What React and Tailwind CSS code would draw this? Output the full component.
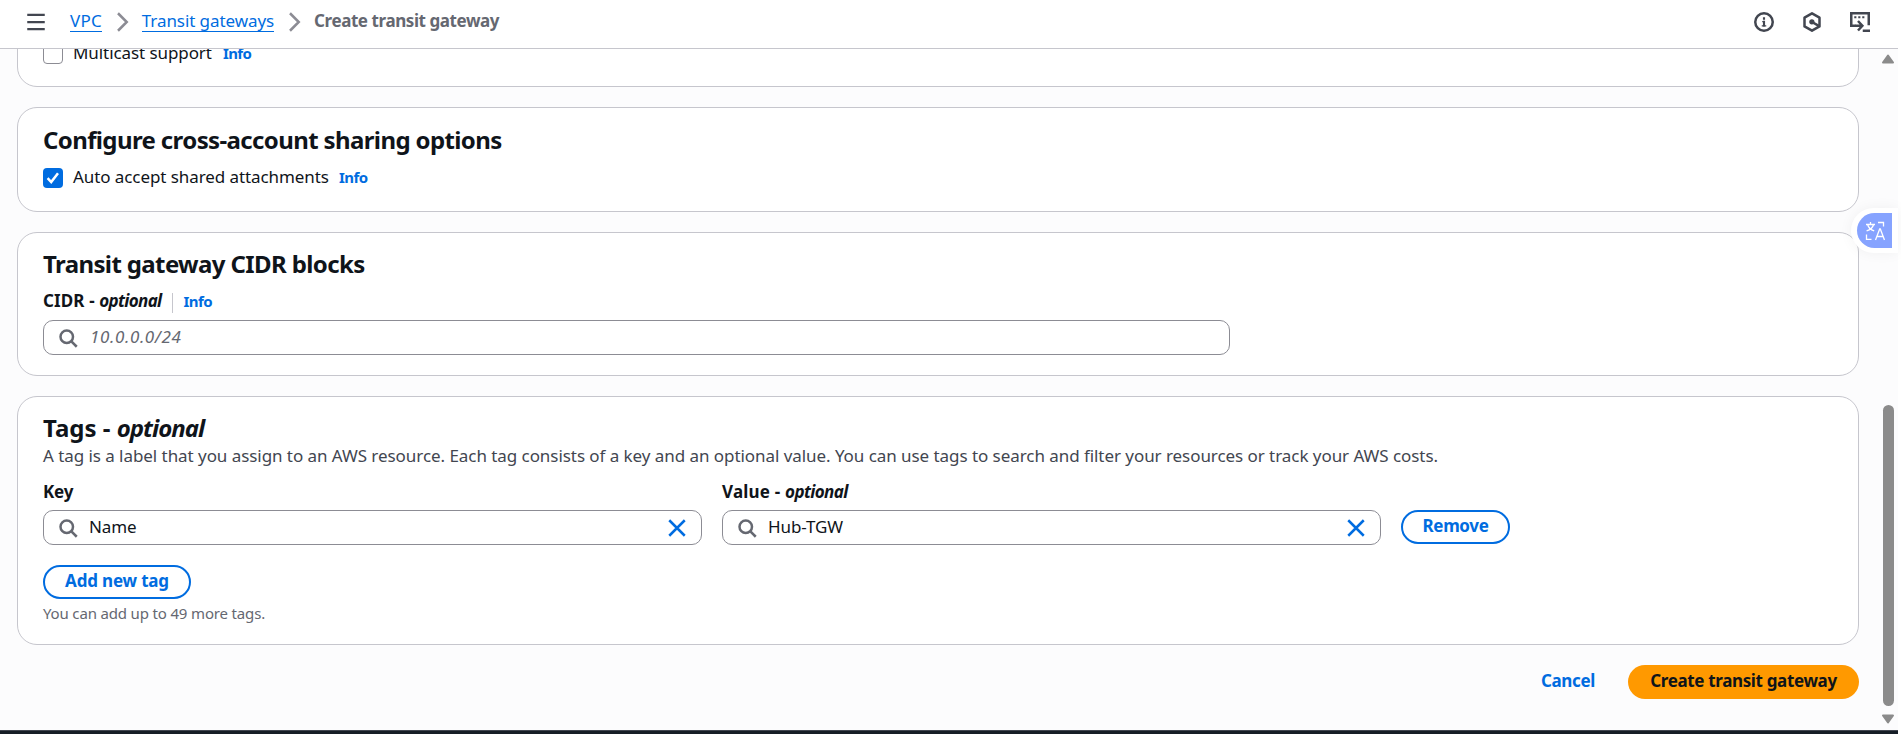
function Svg({ children, className = '' }) {
  return (
    <svg viewBox="0 0 16 16" fill="none" stroke="currentColor" strokeWidth="2" className={`size-5 shrink-0 ${className}`}>
      {children}
    </svg>
  );
}

function SearchIcon() {
  return (
    <Svg className="text-[#656871]">
      <circle cx="7" cy="7" r="5" />
      <path d="m15 15-4.5-4.5" />
    </Svg>
  );
}

function CloseIcon() {
  return (
    <Svg className="text-[#006ce0]">
      <path d="m1.8 1.8 12.4 12.4M14.2 1.8 1.8 14.2" />
    </Svg>
  );
}

function Chevron() {
  return (
    <Svg className="text-[#8c8c94]">
      <path d="m4 1 7 7-7 7" />
    </Svg>
  );
}

function Info({ className = '' }) {
  return (
    <a className={`text-[15px] leading-6 font-bold tracking-[-0.55px] text-[#006ce0] ${className}`}>Info</a>
  );
}

function Card({ children, className = '' }) {
  return (
    <section className={`shrink-0 rounded-[20px] border border-[#c6c6cd] bg-white px-[25px] ${className}`}>
      {children}
    </section>
  );
}

function Heading({ children, className = 'tracking-[-0.62px]' }) {
  return <h2 className={`text-2xl leading-[30px] font-bold ${className}`}>{children}</h2>;
}

function Field({ children, className = '' }) {
  return (
    <div className={`flex h-[35px] items-center rounded-[10px] border border-[#8c8c94] bg-white px-3.5 ${className}`}>
      <SearchIcon />
      {children}
    </div>
  );
}

function TagField({ label, value }) {
  return (
    <div className="w-[659px]">
      <div className="leading-6 font-bold">{label}</div>
      <Field className="mt-1.5">
        <span className="ml-[11px] flex-1 pb-0.5 leading-6">{value}</span>
        <CloseIcon />
      </Field>
    </div>
  );
}

const outlineButton =
  'h-[34px] rounded-full border-2 border-[#006ce0] pb-0.5 text-center leading-[28px] font-bold text-[#006ce0]';

export default function App() {
  return (
    <div className="relative flex h-[734px] w-full overflow-hidden bg-white font-['Noto_Sans',sans-serif] text-[17px] tracking-[-0.08px] text-[#0f141a]">
      <div className="flex w-[1898px] flex-col bg-[#fcfcfd]">
        <header className="flex h-[49px] shrink-0 items-start border-b border-[#c6c6cd] bg-white pr-7 pl-[26px]">
          <Svg className="mt-3 text-[#424650]">
            <path d="M1 2.3h14M1 8h14M1 13.7h14" strokeWidth="1.8" />
          </Svg>
          <nav className="flex pt-[9px] leading-6">
            <a className="ml-6 h-[23px] border-b border-[#006ce0] tracking-[0.2px] text-[#006ce0]">VPC</a>
            <span className="mt-[3px] ml-[11px] flex w-5"><Chevron /></span>
            <a className="ml-[9px] h-[23px] border-b border-[#006ce0] text-[#006ce0]">Transit gateways</a>
            <span className="mt-[3px] ml-[11px] flex w-5"><Chevron /></span>
            <span className="ml-[9px] font-bold tracking-[-0.42px] text-[#656871]">Create transit gateway</span>
          </nav>
          <div className="mt-3 ml-auto flex gap-7 text-[#424650]">
            <Svg>
              <circle cx="8" cy="8" r="7" />
              <path d="M8 7v4.6M8 4.2v2" strokeWidth="1.7" />
              <path d="M6.6 7.6H8M6.2 11.1h3.6" strokeWidth="1" />
            </Svg>
            <Svg>
              <path d="M8 1.1 14 4.5v7L8 14.9 2 11.5v-7Z" strokeLinejoin="round" />
              <circle cx="7.9" cy="7.8" r="2.1" fill="currentColor" stroke="none" />
              <path d="m8 8 5.4 3.1" />
            </Svg>
            <Svg>
              <path d="M4.4 11H1V1h14v9.6" />
              <path d="M3.4 4.2h1.7M6.6 4.2h1.7M9.8 4.2h1.7" strokeWidth="1.7" />
              <path d="M4 11h5M6.4 7.2l3.5 3.8-3.5 3.8M10.2 15H16" />
            </Svg>
          </div>
        </header>

        <div className="flex h-[681px] shrink-0">
          <main className="flex flex-1 flex-col gap-5 overflow-hidden pl-[17px]">
            <section className="-mt-8 flex h-[70px] shrink-0 rounded-b-[20px] border border-[#c6c6cd] bg-white px-[25px] pt-[23px]">
              <span className="mt-[3px] size-5 rounded-[4px] border border-[#8c8c94] bg-white" />
              <span className="ml-2.5 leading-6">Multicast support</span>
              <Info className="ml-[11px]" />
            </section>

            <Card className="h-[105px] pt-[17px]">
              <Heading>Configure cross-account sharing options</Heading>
              <div className="mt-2.5 flex">
                <span className="mt-[3px] flex size-5 items-center justify-center rounded-[4px] bg-[#006ce0]">
                  <svg viewBox="0 0 20 20" className="size-5" fill="none" stroke="#fff" strokeWidth="2.5">
                    <path d="m4.6 10.2 3.6 3.8L15 5.2" />
                  </svg>
                </span>
                <span className="ml-2.5 leading-6">Auto accept shared attachments</span>
                <Info className="ml-2.5" />
              </div>
            </Card>

            <Card className="h-[144px] pt-4">
              <Heading>Transit gateway CIDR blocks</Heading>
              <div className="mt-2.5 flex h-6 leading-6">
                <span className="font-bold tracking-[0.12px]">
                  CIDR - <i className="tracking-[-0.65px]">optional</i>
                </span>
                <span className="mt-1 ml-2.5 h-5 w-px bg-[#c6c6cd]" />
                <Info className="ml-[11px]" />
              </div>
              <Field className="mt-[7px] w-[1187px]">
                <span className="ml-3 pb-px leading-6 tracking-[0.62px] text-[#656871] italic">10.0.0.0/24</span>
              </Field>
            </Card>

            <Card className="h-[249px] pt-4">
              <Heading className="tracking-normal">
                Tags - <i className="tracking-[-0.95px]">optional</i>
              </Heading>
              <p className="mt-[1px] leading-6 tracking-[-0.056px] text-[#424650]">
                A tag is a label that you assign to an AWS resource. Each tag consists of a key and an optional value. You can use tags to search and filter your resources or track your AWS costs.
              </p>
              <div className="mt-3 flex items-end gap-5">
                <TagField label={<span className="tracking-[-0.2px]">Key</span>} value="Name" />
                <TagField
                  label={<span className="tracking-[0.2px]">Value - <i className="tracking-[-0.6px]">optional</i></span>}
                  value="Hub-TGW"
                />
                <button className={`mb-px w-[109px] tracking-[-0.35px] ${outlineButton}`}>Remove</button>
              </div>
              <button className={`mt-5 block w-[148px] tracking-[-0.18px] ${outlineButton}`}>Add new tag</button>
              <p className="mt-1 text-[15px] leading-5 tracking-[-0.16px] text-[#656871]">You can add up to 49 more tags.</p>
            </Card>

            <div className="flex justify-end leading-[32px] font-bold tracking-[-0.35px]">
              <a className="mr-[33px] text-[#006ce0]">Cancel</a>
              <button className="h-[34px] w-[231px] rounded-full bg-[#ff9900] pb-0.5 leading-[32px]">Create transit gateway</button>
            </div>
          </main>

          <div className="flex w-[39px] flex-col items-end pr-[3px]">
            <svg viewBox="0 0 14 10" className="mt-[5px] h-2.5 w-3.5 fill-[#8b8b8b] stroke-[#8b8b8b]" strokeLinejoin="round">
              <path d="M7 1.5 12 8.5H2Z" strokeWidth="2" />
            </svg>
            <div className="mt-[341px] mr-px h-[301px] w-[11px] rounded-full bg-[#8b8b8b]" />
            <svg viewBox="0 0 14 10" className="mt-2 h-2.5 w-3.5 fill-[#8b8b8b] stroke-[#8b8b8b]" strokeLinejoin="round">
              <path d="M7 8.5 12 1.5H2Z" strokeWidth="2" />
            </svg>
          </div>
        </div>
        <footer className="h-1 shrink-0 border-t border-[#424650] bg-[#161d26]" />
      </div>

      <div className="absolute top-[208px] right-[3px] flex h-[45px] w-[47px] items-center rounded-l-full bg-white pl-[6px] shadow-[0_0_14px_rgba(0,0,0,0.05)]">
        <div className="flex h-[35px] w-[35px] items-center justify-center rounded-l-full rounded-r-[2px] bg-[#86a3ff]">
          <svg viewBox="0 0 20 20" className="size-5" fill="none" stroke="#fff" strokeWidth="1.3">
            <path d="M1 3.5h9M5.5 1v2.5M2.6 3.5c.8 3 3.2 5.2 6.6 6.4M8.600 3.500c-.8 3-3.600 5.400-7 6.400M13 1.500h5.500v4M1.500 13.500v4.800h5" />
            <path d="m10.500 19 4.200-11h.6l4.200 11M12 15.500h6" />
          </svg>
        </div>
      </div>
    </div>
  );
}
